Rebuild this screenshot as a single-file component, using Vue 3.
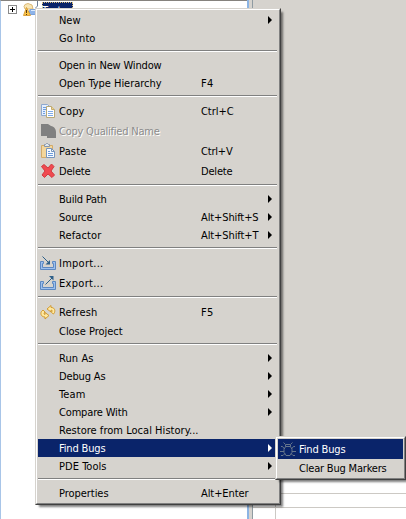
<script setup>
const items = [
  { t: 'New', sub: true, w: 21 },
  { t: 'Go Into', w: 36 },
  { sep: true },
  { t: 'Open in New Window', w: 102 },
  { t: 'Open Type Hierarchy', k: 'F4', w: 102, kw: 12 },
  { sep: true },
  { t: 'Copy', k: 'Ctrl+C', icon: 'copy', w: 25, kw: 32 },
  { t: 'Copy Qualified Name', icon: 'qname', off: true, w: 100 },
  { t: 'Paste', k: 'Ctrl+V', icon: 'paste', w: 27, kw: 31 },
  { t: 'Delete', k: 'Delete', icon: 'delete', w: 31, kw: 31 },
  { sep: true },
  { t: 'Build Path', sub: true, w: 47 },
  { t: 'Source', k: 'Alt+Shift+S', sub: true, w: 33, kw: 57 },
  { t: 'Refactor', k: 'Alt+Shift+T', sub: true, w: 42, kw: 57 },
  { sep: true },
  { t: 'Import...', icon: 'import', w: 44 },
  { t: 'Export...', icon: 'export', w: 44 },
  { sep: true },
  { t: 'Refresh', k: 'F5', icon: 'refresh', w: 38, kw: 12 },
  { t: 'Close Project', w: 63 },
  { sep: true },
  { t: 'Run As', sub: true, w: 34 },
  { t: 'Debug As', sub: true, w: 46 },
  { t: 'Team', sub: true, w: 26 },
  { t: 'Compare With', sub: true, w: 68 },
  { t: 'Restore from Local History...', w: 139 },
  { t: 'Find Bugs', sub: true, on: true, w: 46 },
  { t: 'PDE Tools', sub: true, w: 47 },
  { sep: true },
  { t: 'Properties', k: 'Alt+Enter', w: 49, kw: 47 },
]
const subItems = [
  { t: 'Find Bugs', icon: 'bug', on: true, w: 46 },
  { t: 'Clear Bug Markers', w: 87 },
]

// Spreads a label's letters over the column width given in pixels.
const vFit = (el, { value }) => {
  if (!value) return
  el.style.letterSpacing = '0'
  const natural = el.getBoundingClientRect().width
  el.style.letterSpacing = (value + 0.5 - natural) / el.textContent.length + 'px'
}
</script>

<template>
  <div class="screen">
    <div class="workbench">
      <div class="tree">
        <svg class="node" width="40" height="20" viewBox="0 0 40 20">
          <rect x="8.500" y="5.500" width="8" height="8" fill="#fff" stroke="#8a8a8a" />
          <path d="M10 9.500h5M12.500 7v5" stroke="#000" />
          <path d="M24 6.500l1-2 3-1 4 1.500 1 4h-8z" fill="#f8e6b4" stroke="#dcb877" />
          <path d="M30 9.500h7v5h-8z" fill="#8db3e8" stroke="#7ba2dc" />
          <path d="M31 10.500h5" stroke="#dceafc" />
          <path d="M26.500 7.500l4 8h-7z" fill="#fbc544" stroke="#dba03c" />
          <path d="M26.500 10v3M26.500 14v1" stroke="#5b3a10" />
          <path d="M37.500 1v5l-2 2" fill="none" stroke="#6d7d96" />
        </svg>
        <span class="selected">Test</span>
      </div>
      <div class="sash"></div>
      <div class="editor">
        <div class="blank"></div>
        <div class="table">
          <div class="row"><i></i><b></b></div>
          <div class="row"><i></i><b></b></div>
          <div class="row"><i></i><b></b></div>
        </div>
      </div>
    </div>

    <div
      v-for="(list, n) in [items, subItems]"
      :key="n"
      class="menu"
      :class="n ? 'child' : 'main'"
    >
      <div class="inner">
        <template v-for="(m, i) in list" :key="i">
          <div v-if="m.sep" class="sep"></div>
          <div v-else class="item" :class="{ tall: m.icon, on: m.on, off: m.off }">
            <span class="icon">
              <svg v-if="m.icon" width="16" height="16" viewBox="0 0 16 16">
                <g v-if="m.icon === 'copy'">
                  <path d="M1.500 1.500h6l2 2v9h-8z" fill="#e4efff" stroke="#8fa9cf" />
                  <path d="M3 4.500h3M3 6.500h3M3 8.500h2M3 10.500h2" stroke="#6f9fe0" />
                  <path d="M6.500 3.500h5l3 3v8h-8z" fill="#fff" stroke="#b8a878" />
                  <path d="M11.500 3.500v3h3" fill="#f2d48a" stroke="#c3ac70" />
                  <path d="M8 8.500h5M8 10.500h5M8 12.500h5" stroke="#7fabea" />
                </g>
                <path
                  v-else-if="m.icon === 'qname'"
                  d="M1 1h7l3 2c3 .5 5 3 5 6v6H7v-2H1z"
                  fill="#808080"
                />
                <g v-else-if="m.icon === 'paste'">
                  <path d="M1.500 2.500h11v12h-11z" fill="#f3d69c" stroke="#d3aa68" />
                  <path d="M4.500 3.500v-2h1l1-1h1l1 1h1v2z" fill="#e0e7ee" stroke="#8695a8" />
                  <path d="M6.500 5.500h5l3 3v6h-8z" fill="#f7fbff" stroke="#7795bd" />
                  <path d="M11.500 5.500v3h3" fill="none" stroke="#7795bd" />
                  <path d="M8 8.500h2M8 10.500h5M8 12.500h5" stroke="#6d9cdc" />
                </g>
                <path
                  v-else-if="m.icon === 'delete'"
                  d="M1.500 3.500l2.500-2 4 3.500 3.500-4 2.500 2.500L11 8l3.500 4-2.500 2.500-4-3.500-3.500 3.500L2 12l3-4z"
                  fill="#f04a50"
                  stroke="#d23a40"
                />
                <g v-else-if="m.icon === 'import' || m.icon === 'export'">
                  <path
                    d="M3.500 6.500h-3v8h15v-8h-3v2h1v4h-11v-4h1z"
                    fill="#9dc0ee"
                    stroke="#5c88c2"
                  />
                  <g v-if="m.icon === 'import'" stroke="#2d5f88" fill="#2d5f88">
                    <path d="M2.500 1.500l7 7" />
                    <path d="M10 5v4.500H5.500z" stroke="none" />
                  </g>
                  <g v-else stroke="#2d5f88" fill="#2d5f88">
                    <path d="M5.500 9.500l7-7" />
                    <path d="M9 1h4.500v4.500z" stroke="none" />
                  </g>
                </g>
                <g v-else-if="m.icon === 'refresh'" fill="#ffe9a0" stroke="#cf9426" stroke-width=".9">
                  <path d="M7 5l4-3.500v2c3 0 4.500 2 3.500 5l-1 1.500-2-1.500c1-2 .5-2.500-.5-2.500v2z" />
                  <path d="M9 11.500L5 15v-2c-3.500 0-5-3-3.500-5.500L3 6l2 2c-1.500 1.500-1 2.500 0 2.500v-2z" />
                </g>
                <g v-else fill="none" stroke="#66768c">
                  <path d="M5.500 5.500h5l1.500 3v3l-2 3h-4l-2-3v-3zM5.500 5.500v-2l-2-2M10.500 5.500v-2l2-2M6 3.500h4" />
                  <path d="M4.500 8l-2-2.500H1M4 10.500H0M5 12.500l-2 2H1M11.500 8l2-2.500H15M12 10.500h4M11 12.500l2 2h2" />
                </g>
              </svg>
            </span>
            <span class="label"><span v-fit="m.w">{{ m.t }}</span></span>
            <span class="key"><span v-if="m.k" v-fit="m.kw">{{ m.k }}</span></span>
            <svg v-if="m.sub" class="arrow" width="4" height="8" viewBox="0 0 4 8">
              <path d="M0 0l4 4-4 4z" fill="currentColor" />
            </svg>
          </div>
        </template>
      </div>
    </div>
  </div>
</template>

<style>
body {
  margin: 0;
  overflow: hidden;
}
</style>

<style scoped>
.screen {
  position: relative;
  width: 406px;
  height: 519px;
  overflow: hidden;
  background: #d6d3ce;
  font: 11px/18px "DejaVu Sans Condensed", "DejaVu Sans", sans-serif;
  font-stretch: condensed;
  color: #000;
}
.workbench {
  display: flex;
  height: 519px;
}
.tree {
  display: flex;
  box-sizing: border-box;
  width: 247px;
  border-left: 1px solid #a8c5e8;
  border-top: 1px solid #85827e;
  background: #fff;
}
.node {
  flex: none;
  margin-left: -1px;
  margin-top: -1px;
}
.selected {
  height: 16px;
  width: 31px;
  margin-left: 2px;
  margin-top: 1px;
  line-height: 17px;
  background: #0a246a;
  color: #fff;
  outline: 1px dotted #d8bd78;
  outline-offset: -1px;
}
.sash {
  box-sizing: border-box;
  width: 6px;
  border-left: 2px solid #8cb4e4;
  border-right: 1px solid #8f9ba2;
  background: #d6d3ce;
}
.editor {
  flex: 1;
}
.blank {
  height: 479px;
}
.table {
  border-top: 1px solid #aaa;
  background: #fff;
}
.row {
  display: flex;
  box-sizing: border-box;
  height: 14px;
  border-bottom: 1px solid #ccc9c4;
}
.row i {
  width: 22px;
  border-right: 1px solid #ccc9c4;
}
.menu {
  position: absolute;
  box-sizing: border-box;
  border: 1px solid;
  border-color: #d6d3ce #404040 #404040 #d6d3ce;
  background: #d6d3ce;
  box-shadow: 3px 3px 2px -1px rgba(0, 0, 0, 0.5);
}
.main {
  left: 35px;
  top: 8px;
  width: 246px;
  height: 497px;
}
.child {
  left: 275px;
  top: 436px;
  width: 131px;
  height: 44px;
}
.inner {
  box-sizing: border-box;
  height: 100%;
  padding: 1px;
  border: 1px solid;
  border-color: #fff #808080 #808080 #fff;
}
.sep {
  box-sizing: border-box;
  height: 2px;
  margin: 3px 1px 4px 0;
  border-top: 1px solid #808080;
  border-bottom: 1px solid #fff;
}
.item {
  display: flex;
  align-items: center;
  height: 18px;
  white-space: pre;
}
.tall {
  height: 20px;
}
.on {
  background: #0a246a;
  color: #fff;
}
.off {
  color: #8c8c8c;
  text-shadow: 1px 1px #fff;
}
.icon {
  display: flex;
  width: 21px;
  padding-left: 2px;
  box-sizing: border-box;
}
.label {
  width: 142px;
  padding-top: 2px;
}
.child .label {
  width: 100px;
}
.key {
  width: 67px;
  padding-top: 2px;
}
.child .item:first-child .label {
  padding-top: 1px;
}
.child .key {
  display: none;
}
</style>
